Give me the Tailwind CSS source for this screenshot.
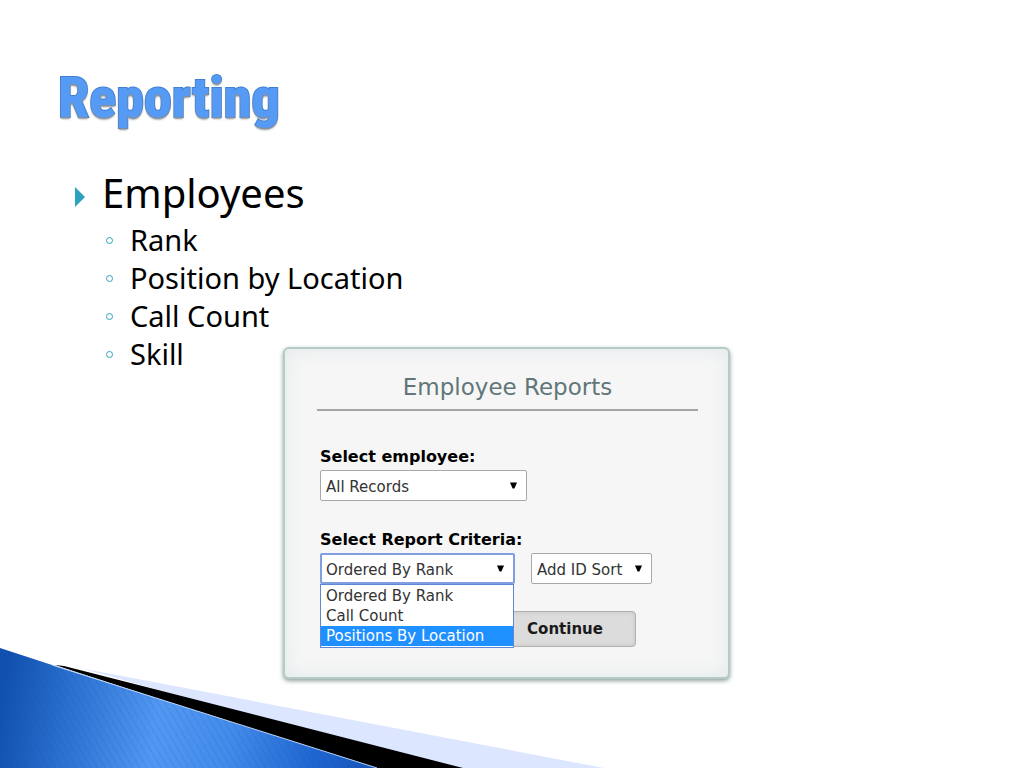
<!DOCTYPE html>
<html lang="en">
<head>
    <meta charset="UTF-8">
    <meta name="viewport" content="width=device-width, initial-scale=1.0">
    <title>Reporting</title>
    <script src="https://cdn.jsdelivr.net/npm/@tailwindcss/browser@4"></script>
</head>
<body class="relative min-h-screen overflow-x-hidden bg-white text-black font-['Noto_Sans',sans-serif]">
    <!-- Corner swoosh -->
    <svg class="absolute bottom-0 left-0 w-full h-[120px]" viewBox="0 0 1024 120" preserveAspectRatio="none" aria-hidden="true">
        <defs>
            <linearGradient id="swoosh" gradientUnits="userSpaceOnUse" x1="0" y1="60" x2="370" y2="120">
                <stop offset="0" stop-color="#1150ae"/>
                <stop offset="0.2" stop-color="#2d74d2"/>
                <stop offset="0.42" stop-color="#5298f2"/>
                <stop offset="0.62" stop-color="#438bea"/>
                <stop offset="0.85" stop-color="#1f65d0"/>
                <stop offset="1" stop-color="#1856b8"/>
            </linearGradient>
            <pattern id="grain" width="7" height="12" patternUnits="userSpaceOnUse">
                <path d="M0 0L7 12" stroke="#0d4aa8" stroke-opacity="0.18" stroke-width="1"/>
            </pattern>
        </defs>
        <path d="M80 20L604 120H440Z" fill="#dce6ff"/>
        <path d="M55 17L64 18L463 120H370Z" fill="#000"/>
        <path d="M0 0L52 17L377 120H0Z" fill="url(#swoosh)"/>
        <path d="M0 0L52 17L377 120H0Z" fill="url(#grain)"/>
        <path d="M52 17L377 120" fill="none" stroke="#b9d4fa" stroke-width="1"/>
    </svg>

    <div class="relative">
        <header class="pt-[66px] pl-[58px]">
            <h1 class="text-[56px] leading-[64px] font-extrabold text-[#559bf5] font-['Roboto_Condensed','Roboto',sans-serif] [paint-order:stroke_fill] [-webkit-text-stroke:2px_#4080d2] [text-shadow:0_2px_2px_#8a8f98]">Reporting</h1>
        </header>

        <main class="pt-[35px]">
            <ul class="pl-[74px]">
                <li>
                    <div class="flex items-center">
                        <svg class="mt-2 mr-[17px] h-[20px] w-[11px] shrink-0" viewBox="0 0 11 20" aria-hidden="true"><path d="M1 0L11 10L1 20Z" fill="#2da2bf"/></svg>
                        <span class="text-[40px] leading-[56px]">Employees</span>
                    </div>
                    <ul class="pl-[32px] text-[29px] leading-[38px]">
                        <li class="flex items-center gap-[17px]"><span class="size-[7px] rounded-full border border-[#2da2bf]"></span>Rank</li>
                        <li class="flex items-center gap-[17px]"><span class="size-[7px] rounded-full border border-[#2da2bf]"></span>Position by Location</li>
                        <li class="flex items-center gap-[17px]"><span class="size-[7px] rounded-full border border-[#2da2bf]"></span>Call Count</li>
                        <li class="flex items-center gap-[17px]"><span class="size-[7px] rounded-full border border-[#2da2bf]"></span>Skill</li>
                    </ul>
                </li>
            </ul>

            <!-- Employee reports form -->
            <form class="-mt-[26px] ml-[283px] w-[447px] rounded-md border-2 border-[#b4cbc8] bg-[#f6f6f6] pr-[30px] pl-[32px] pt-[21px] pb-[30px] font-['DejaVu_Sans',sans-serif] text-[#333] shadow-[0_2px_4px_#8fa09d,inset_0_0_20px_#e2e8ea]">
                <h2 class="border-b-2 border-[#a5a5a5] pb-[5px] text-center text-[23px] leading-[34px] text-[#617678]">Employee Reports</h2>

                <div class="px-[3px] pt-[35px]">
                    <label for="employee" class="block text-base leading-[22px] font-bold text-black">Select employee:</label>
                    <div class="relative mt-[2px] w-[207px]">
                        <select id="employee" class="block h-[31px] w-full appearance-none rounded-xs border border-[#a9a9a9] bg-white pt-[4px] pl-[5px] text-[15px]">
                            <option>All Records</option>
                        </select>
                        <svg class="pointer-events-none absolute top-[12px] right-[10px] h-[7px] w-[7px]" viewBox="0 0 8 7" aria-hidden="true"><path d="M0 0H8L5 7H3Z" fill="#000"/></svg>
                    </div>

                    <label for="criteria" class="mt-[28px] block text-base leading-[22px] font-bold text-black">Select Report Criteria:</label>
                    <div class="mt-[2px] flex gap-[16px]">
                        <div class="relative w-[195px]">
                            <select id="criteria" class="block h-[31px] w-full appearance-none rounded-xs border-2 border-[#7f9fe0] bg-white pt-[4px] pl-[4px] text-[15px]">
                                <option>Ordered By Rank</option>
                                <option>Call Count</option>
                                <option>Positions By Location</option>
                            </select>
                            <svg class="pointer-events-none absolute top-[12px] right-[11px] h-[7px] w-[7px]" viewBox="0 0 8 7" aria-hidden="true"><path d="M0 0H8L5 7H3Z" fill="#000"/></svg>
                            <ul role="listbox" aria-label="Report criteria" class="absolute top-[31px] left-0 z-10 w-[194px] border border-[#5f87d8] bg-white pt-[1px] pb-[1px] text-[15px] leading-[20px]">
                                <li role="option" class="pl-[5px]">Ordered By Rank</li>
                                <li role="option" class="pl-[5px]">Call Count</li>
                                <li role="option" aria-selected="true" class="bg-[#1e90ff] pl-[5px] text-white">Positions By Location</li>
                            </ul>
                        </div>
                        <div class="relative w-[121px]">
                            <select id="sort" aria-label="Sort" class="block h-[31px] w-full appearance-none rounded-xs border border-[#a9a9a9] bg-white pt-[4px] pl-[5px] text-[15px]">
                                <option>Add ID Sort</option>
                            </select>
                            <svg class="pointer-events-none absolute top-[12px] right-[10px] h-[7px] w-[7px]" viewBox="0 0 8 7" aria-hidden="true"><path d="M0 0H8L5 7H3Z" fill="#000"/></svg>
                        </div>
                    </div>
                    <button type="button" class="mt-[27px] ml-[174px] block h-[36px] w-[142px] rounded-sm border border-[#b0b0b0] bg-[#dcdcdc] text-[15px] font-bold text-[#1a1a1a] shadow-[inset_0_0_4px_#c4c4c4]">Continue</button>
                </div>
            </form>
        </main>
    </div>
</body>
</html>
